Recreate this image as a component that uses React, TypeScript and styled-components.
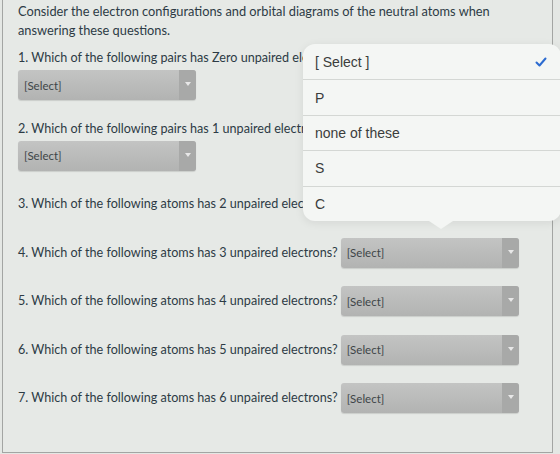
import styled, { createGlobalStyle } from "styled-components";

const GlobalStyle = createGlobalStyle`
  html, body {
    margin: 0;
    padding: 0;
    background: #e4e7e4;
  }
  body {
    font-family: Lato, "Liberation Sans", sans-serif;
    color: #2d3b45;
  }
`;

const Page = styled.div`
  position: relative;
  width: 560px;
  height: 454px;
  overflow: hidden;
`;

const Panel = styled.section`
  box-sizing: border-box;
  width: 551px;
  height: 453px;
  margin-left: 2px;
  padding: 2px 0 0 15px;
  border: 1px solid #a3a5a3;
  border-top: none;
  background: #e6e9e6;
`;

const Intro = styled.p`
  margin: 0;
  font-size: 12.8px;
  line-height: 19px;
  width: 510px;
`;

const List = styled.div`
  margin-top: 8px;
`;

const Question = styled.div<{ $stacked?: boolean }>`
  display: flex;
  flex-direction: ${(p) => (p.$stacked ? "column" : "row")};
  align-items: ${(p) => (p.$stacked ? "flex-start" : "center")};
  gap: ${(p) => (p.$stacked ? "4px" : "3px")};
  margin-bottom: 18.5px;
  font-size: 12.6px;
  white-space: nowrap;
`;

const Label = styled.span<{ $stacked?: boolean }>`
  line-height: ${(p) => (p.$stacked ? "17px" : "30px")};
  padding-top: ${(p) => (p.$stacked ? "1px" : "0")};
`;

const SelectBox = styled.div`
  position: relative;
  box-sizing: border-box;
  width: 178px;
  height: 30px;
  padding-left: 6px;
  display: flex;
  align-items: center;
  border-radius: 3px;
  background: linear-gradient(#c3c4c3, #b2b3b2);
  box-shadow: 0 1px 1px rgba(0, 0, 0, 0.12);
  font-size: 11.5px;
  color: #3e4548;
  overflow: hidden;
`;

const Arrow = styled.span`
  position: absolute;
  right: 0;
  top: 0;
  bottom: 0;
  width: 17px;
  background: #a8a9a8;
  &::after {
    content: "";
    position: absolute;
    left: 6px;
    top: 12px;
    border-left: 3px solid transparent;
    border-right: 3px solid transparent;
    border-top: 4px solid #e8e8e8;
  }
`;

const Popover = styled.div`
  position: absolute;
  left: 303px;
  top: 44px;
  width: 258px;
  border-radius: 12px;
  background: #f4f6f4;
  box-shadow: 0 2px 10px rgba(0, 0, 0, 0.08);
  font-family: "Liberation Sans", Arial, sans-serif;
  &::after {
    content: "";
    position: absolute;
    left: 126px;
    bottom: -8px;
    border-left: 12px solid transparent;
    border-right: 12px solid transparent;
    border-top: 8px solid #f4f6f4;
  }
`;

const Option = styled.div`
  box-sizing: border-box;
  height: 35.4px;
  padding-left: 12px;
  padding-right: 14px;
  display: flex;
  align-items: center;
  justify-content: space-between;
  font-size: 14px;
  color: #3b3d3c;
  & + & {
    border-top: 1px solid #d4d7d4;
  }
`;

const Check = () => (
  <svg width="12" height="10" viewBox="0 0 12 10">
    <polyline
      points="1.5,5.5 4.5,8.5 10.5,1.5"
      fill="none"
      stroke="#2c6bd0"
      strokeWidth="2"
      strokeLinecap="round"
      strokeLinejoin="round"
    />
  </svg>
);

const questions = [
  { text: "1. Which of the following pairs has Zero unpaired electrons?", stacked: true },
  { text: "2. Which of the following pairs has 1 unpaired electron?", stacked: true },
  { text: "3. Which of the following atoms has 2 unpaired electrons?" },
  { text: "4. Which of the following atoms has 3 unpaired electrons?" },
  { text: "5. Which of the following atoms has 4 unpaired electrons?" },
  { text: "6. Which of the following atoms has 5 unpaired electrons?" },
  { text: "7. Which of the following atoms has 6 unpaired electrons?" },
];

const options = ["[ Select ]", "P", "none of these", "S", "C"];

export default function App() {
  return (
    <Page>
      <GlobalStyle />
      <Panel>
        <Intro>
          Consider the electron configurations and orbital diagrams of the neutral atoms when
          answering these questions.
        </Intro>
        <List>
          {questions.map((q) => (
            <Question key={q.text} $stacked={q.stacked}>
              <Label $stacked={q.stacked}>{q.text}</Label>
              <SelectBox>
                [Select]
                <Arrow />
              </SelectBox>
            </Question>
          ))}
        </List>
      </Panel>
      <Popover>
        {options.map((o, i) => (
          <Option key={o}>
            {o}
            {i === 0 && <Check />}
          </Option>
        ))}
      </Popover>
    </Page>
  );
}
